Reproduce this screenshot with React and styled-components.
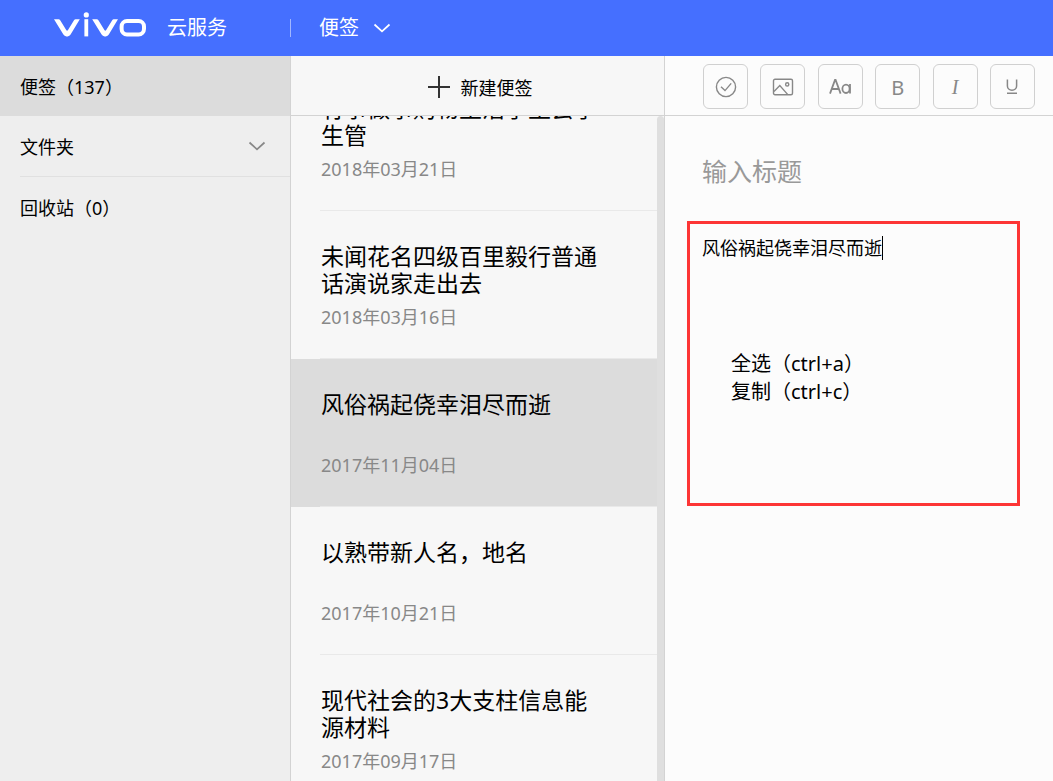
import React, { useLayoutEffect, useRef, useState } from 'react';
import styled, { createGlobalStyle } from 'styled-components';

const notes = [
  { id: 1, title: '有事做事购物生活学生会学生管', date: '2018年03月21日' },
  { id: 2, title: '未闻花名四级百里毅行普通话演说家走出去', date: '2018年03月16日' },
  { id: 3, title: '风俗祸起侥幸泪尽而逝', date: '2017年11月04日' },
  { id: 4, title: '以熟带新人名，地名', date: '2017年10月21日' },
  { id: 5, title: '现代社会的3大支柱信息能源材料', date: '2017年09月17日' },
];

const Chevron = () => (
  <svg width="18" height="10" viewBox="0 0 18 10" fill="none" stroke="currentColor" strokeWidth="1.7">
    <path d="M1.5 1.5 9 8.3l7.5-6.8" />
  </svg>
);

const Logo = () => (
  <svg width="94" height="26" viewBox="0 0 94 26" role="img" aria-label="vivo">
    <g fill="#fff">
      <path d="M1 7.2h4.6q1 0 1.6 1l6 9.8q.9 1.4 1.8 0l6-9.8q.6-1 1.6-1h4.2L17.6 22.6Q16.6 24.4 14.6 24.4h-1.2q-2 0-3-1.8Z" />
      <rect x="31.4" y="7.2" width="3.8" height="17.2" />
      <circle cx="33.3" cy="2.9" r="2.6" />
      <path d="M39.2 7.2h4.6q1 0 1.6 1l6 9.8q.9 1.4 1.8 0l6-9.8q.6-1 1.6-1h4.2L55.8 22.6q-1 1.8-3 1.8h-1.2q-2 0-3-1.8Z" />
    </g>
    <rect x="68.6" y="9.1" width="22.4" height="13.4" rx="5.4" fill="none" stroke="#fff" strokeWidth="4" />
  </svg>
);

const CheckIcon = () => (
  <svg width="22" height="22" viewBox="0 0 22 22" fill="none" stroke="currentColor" strokeWidth="1.4">
    <circle cx="11" cy="11" r="9.6" />
    <path d="m6 10.8 4 3.8 6.2-7.2" />
  </svg>
);

const ImageIcon = () => (
  <svg width="22" height="18" viewBox="0 0 22 18" fill="none" stroke="currentColor" strokeWidth="1.4">
    <rect x="1.5" y="1.2" width="19" height="15.6" rx="1.5" />
    <path d="m2 13.6 5.8-6 8 9" />
    <circle cx="15.2" cy="6.4" r="1.6" />
  </svg>
);

const FontIcon = () => (
  <svg width="24" height="18" viewBox="0 0 24 18" fill="none" stroke="currentColor" strokeWidth="1.8">
    <path d="M2 15.6 7 2h.6l5 13.6M3.8 11h7" />
    <ellipse cx="18" cy="10.8" rx="3.6" ry="4.2" />
    <path d="M22 6v9.6" />
  </svg>
);

const UnderlineIcon = () => (
  <svg width="14" height="18" viewBox="0 0 14 18" fill="none" stroke="currentColor" strokeWidth="1.5">
    <path d="M2.4 1.5v6.6a4.6 4.2 0 0 0 9.2 0V1.5M2 15.2h10" />
  </svg>
);

const App = () => {
  const listRef = useRef(null);
  const [selected, setSelected] = useState(3);
  const [content, setContent] = useState('风俗祸起侥幸泪尽而逝');

  useLayoutEffect(() => {
    listRef.current.scrollTop = 53;
  }, []);

  return (
    <Page>
      <GlobalStyle />
      <Header>
        <Brand href="#">
          <Logo />
          <span>云服务</span>
        </Brand>
        <AppSwitch type="button">
          便签
          <Chevron />
        </AppSwitch>
      </Header>
      <Main>
        <Sidebar>
          <SideItem type="button" $active>
            <SideLabel>便签（137）</SideLabel>
          </SideItem>
          <SideItem type="button">
            <SideLabel $line>
              文件夹
              <Chevron />
            </SideLabel>
          </SideItem>
          <SideItem type="button">
            <SideLabel>回收站（0）</SideLabel>
          </SideItem>
        </Sidebar>
        <ListColumn>
          <NewNote type="button">
            <svg width="22" height="22" viewBox="0 0 22 22" stroke="#333" strokeWidth="2">
              <path d="M11 0v22M0 11h22" />
            </svg>
            新建便签
          </NewNote>
          <ListArea>
            <NoteList ref={listRef}>
              {notes.map(({ id, title, date }) => (
                <NoteItem key={id} type="button" $active={id === selected} onClick={() => setSelected(id)}>
                  <NoteInner>
                    <NoteTitle>{title}</NoteTitle>
                    <NoteDate>{date}</NoteDate>
                  </NoteInner>
                </NoteItem>
              ))}
            </NoteList>
            <ScrollThumb />
          </ListArea>
        </ListColumn>
        <Editor>
          <Toolbar>
            <ToolButton type="button" aria-label="待办"><CheckIcon /></ToolButton>
            <ToolButton type="button" aria-label="图片"><ImageIcon /></ToolButton>
            <ToolButton type="button" aria-label="字体"><FontIcon /></ToolButton>
            <ToolButton type="button">B</ToolButton>
            <ToolButton type="button" $italic>I</ToolButton>
            <ToolButton type="button" aria-label="下划线"><UnderlineIcon /></ToolButton>
          </Toolbar>
          <TitleInput placeholder="输入标题" aria-label="标题" />
          <ContentBox>
            <ContentRow>
              <Content
                rows={1}
                aria-label="内容"
                value={content}
                onChange={e => setContent(e.target.value)}
              />
              <Caret />
            </ContentRow>
            <Shortcuts>
              <div>全选（ctrl+a）</div>
              <div>复制（ctrl+c）</div>
            </Shortcuts>
          </ContentBox>
        </Editor>
      </Main>
    </Page>
  );
};

export default App;

const GlobalStyle = createGlobalStyle`
  * {
    box-sizing: border-box;
  }
  body {
    margin: 0;
  }
  body, button, input, textarea {
    font-family: "Noto Sans", "Noto Sans CJK SC", sans-serif;
    font-weight: 400;
    color: #000;
  }
  button {
    border: 0;
    padding: 0;
    background: none;
    text-align: left;
    cursor: pointer;
  }
`;

const Page = styled.div`
  display: flex;
  flex-direction: column;
  height: 100vh;
`;

const Header = styled.header`
  display: flex;
  align-items: center;
  flex: none;
  height: 56px;
  background: #456fff;
`;

const Brand = styled.a`
  display: flex;
  align-items: center;
  gap: 20px;
  width: 290px;
  padding: 0 0 6px 53px;
  color: #fff;
  font-size: 20px;
  line-height: 24px;
  text-decoration: none;

  span {
    padding-top: 6px;
  }
`;

const AppSwitch = styled.button`
  display: flex;
  align-items: center;
  gap: 14px;
  height: 18px;
  padding-left: 28px;
  border-left: 1px solid rgba(255, 255, 255, 0.5);
  color: #fff;
  font-size: 20px;
  line-height: 18px;
`;

const Main = styled.main`
  display: flex;
  flex: 1;
  min-height: 0;
`;

const Sidebar = styled.nav`
  flex: none;
  width: 291px;
  border-right: 1px solid #d3d3d3;
  background: #eee;
`;

const SideItem = styled.button`
  display: block;
  width: 100%;
  padding-left: 20px;
  background: ${props => (props.$active ? '#dcdcdc' : 'transparent')};
`;

const SideLabel = styled.span`
  display: flex;
  align-items: center;
  justify-content: space-between;
  height: ${props => (props.$line ? '61px' : '60px')};
  padding-right: 24px;
  border-bottom: ${props => (props.$line ? '1px solid #e0e0e0' : '0')};
  font-size: 18px;

  svg {
    color: #888;
  }
`;

const ListColumn = styled.section`
  display: flex;
  flex-direction: column;
  flex: none;
  width: 374px;
  border-right: 1px solid #d3d3d3;
  background: #f7f7f7;
`;

const NewNote = styled.button`
  display: flex;
  align-items: center;
  justify-content: center;
  flex: none;
  gap: 11px;
  height: 60px;
  padding: 2px 0 0 5px;
  border-bottom: 1px solid #d3d3d3;
  font-size: 18px;
`;

const ListArea = styled.div`
  display: flex;
  flex: 1;
  min-height: 0;
`;

const NoteList = styled.div`
  flex: 1;
  overflow-y: auto;
  scrollbar-width: none;
`;

const ScrollThumb = styled.div`
  width: 7px;
  border-radius: 4px 4px 0 0;
  background: #dfdfdf;
`;

const NoteItem = styled.button`
  display: block;
  width: 100%;
  height: 148px;
  padding-left: 29px;
  background: ${props => (props.$active ? '#dcdcdc' : 'transparent')};
`;

const NoteInner = styled.span`
  display: flex;
  flex-direction: column;
  gap: 8px;
  height: 148px;
  padding: 32px 56px 0 1px;
  border-bottom: 1px solid #e9e9e9;
`;

const NoteTitle = styled.span`
  height: 54px;
  font-size: 23px;
  line-height: 27px;
`;

const NoteDate = styled.span`
  color: #888;
  font-size: 18px;
  line-height: 24px;
`;

const Editor = styled.section`
  flex: 1;
  min-width: 0;
  background: #fcfcfc;
`;

const Toolbar = styled.div`
  display: flex;
  align-items: center;
  justify-content: space-between;
  height: 60px;
  padding: 2px 18px 0 38px;
  border-bottom: 1px solid #d3d3d3;
`;

const ToolButton = styled.button`
  display: flex;
  align-items: center;
  justify-content: center;
  width: 45px;
  height: 45px;
  padding-top: 1px;
  border: 1px solid #d0d0d0;
  border-radius: 6px;
  color: #888;
  font-family: ${props => (props.$italic ? '"Liberation Serif", serif' : '"Noto Sans", sans-serif')};
  font-size: 20px;
  font-style: ${props => (props.$italic ? 'italic' : 'normal')};
`;

const TitleInput = styled.input`
  display: block;
  width: 100%;
  height: 36px;
  margin: 37px 0 32px;
  padding: 0 37px;
  border: 0;
  outline: 0;
  background: none;
  font-size: 25px;

  &::placeholder {
    color: #999;
  }
`;

const ContentBox = styled.div`
  height: 285px;
  margin: 0 33px 0 22px;
  padding: 12px;
  border: 3px solid #fd3535;
`;

const ContentRow = styled.div`
  display: flex;
  align-items: center;
`;

const Content = styled.textarea`
  field-sizing: content;
  padding: 0;
  border: 0;
  outline: 0;
  resize: none;
  overflow: hidden;
  background: none;
  font-size: 18px;
  line-height: 24px;
`;

const Caret = styled.span`
  width: 1px;
  height: 24px;
  background: #000;
`;

const Shortcuts = styled.div`
  padding: 90px 0 0 29px;
  font-size: 20px;
  line-height: 28px;
`;
